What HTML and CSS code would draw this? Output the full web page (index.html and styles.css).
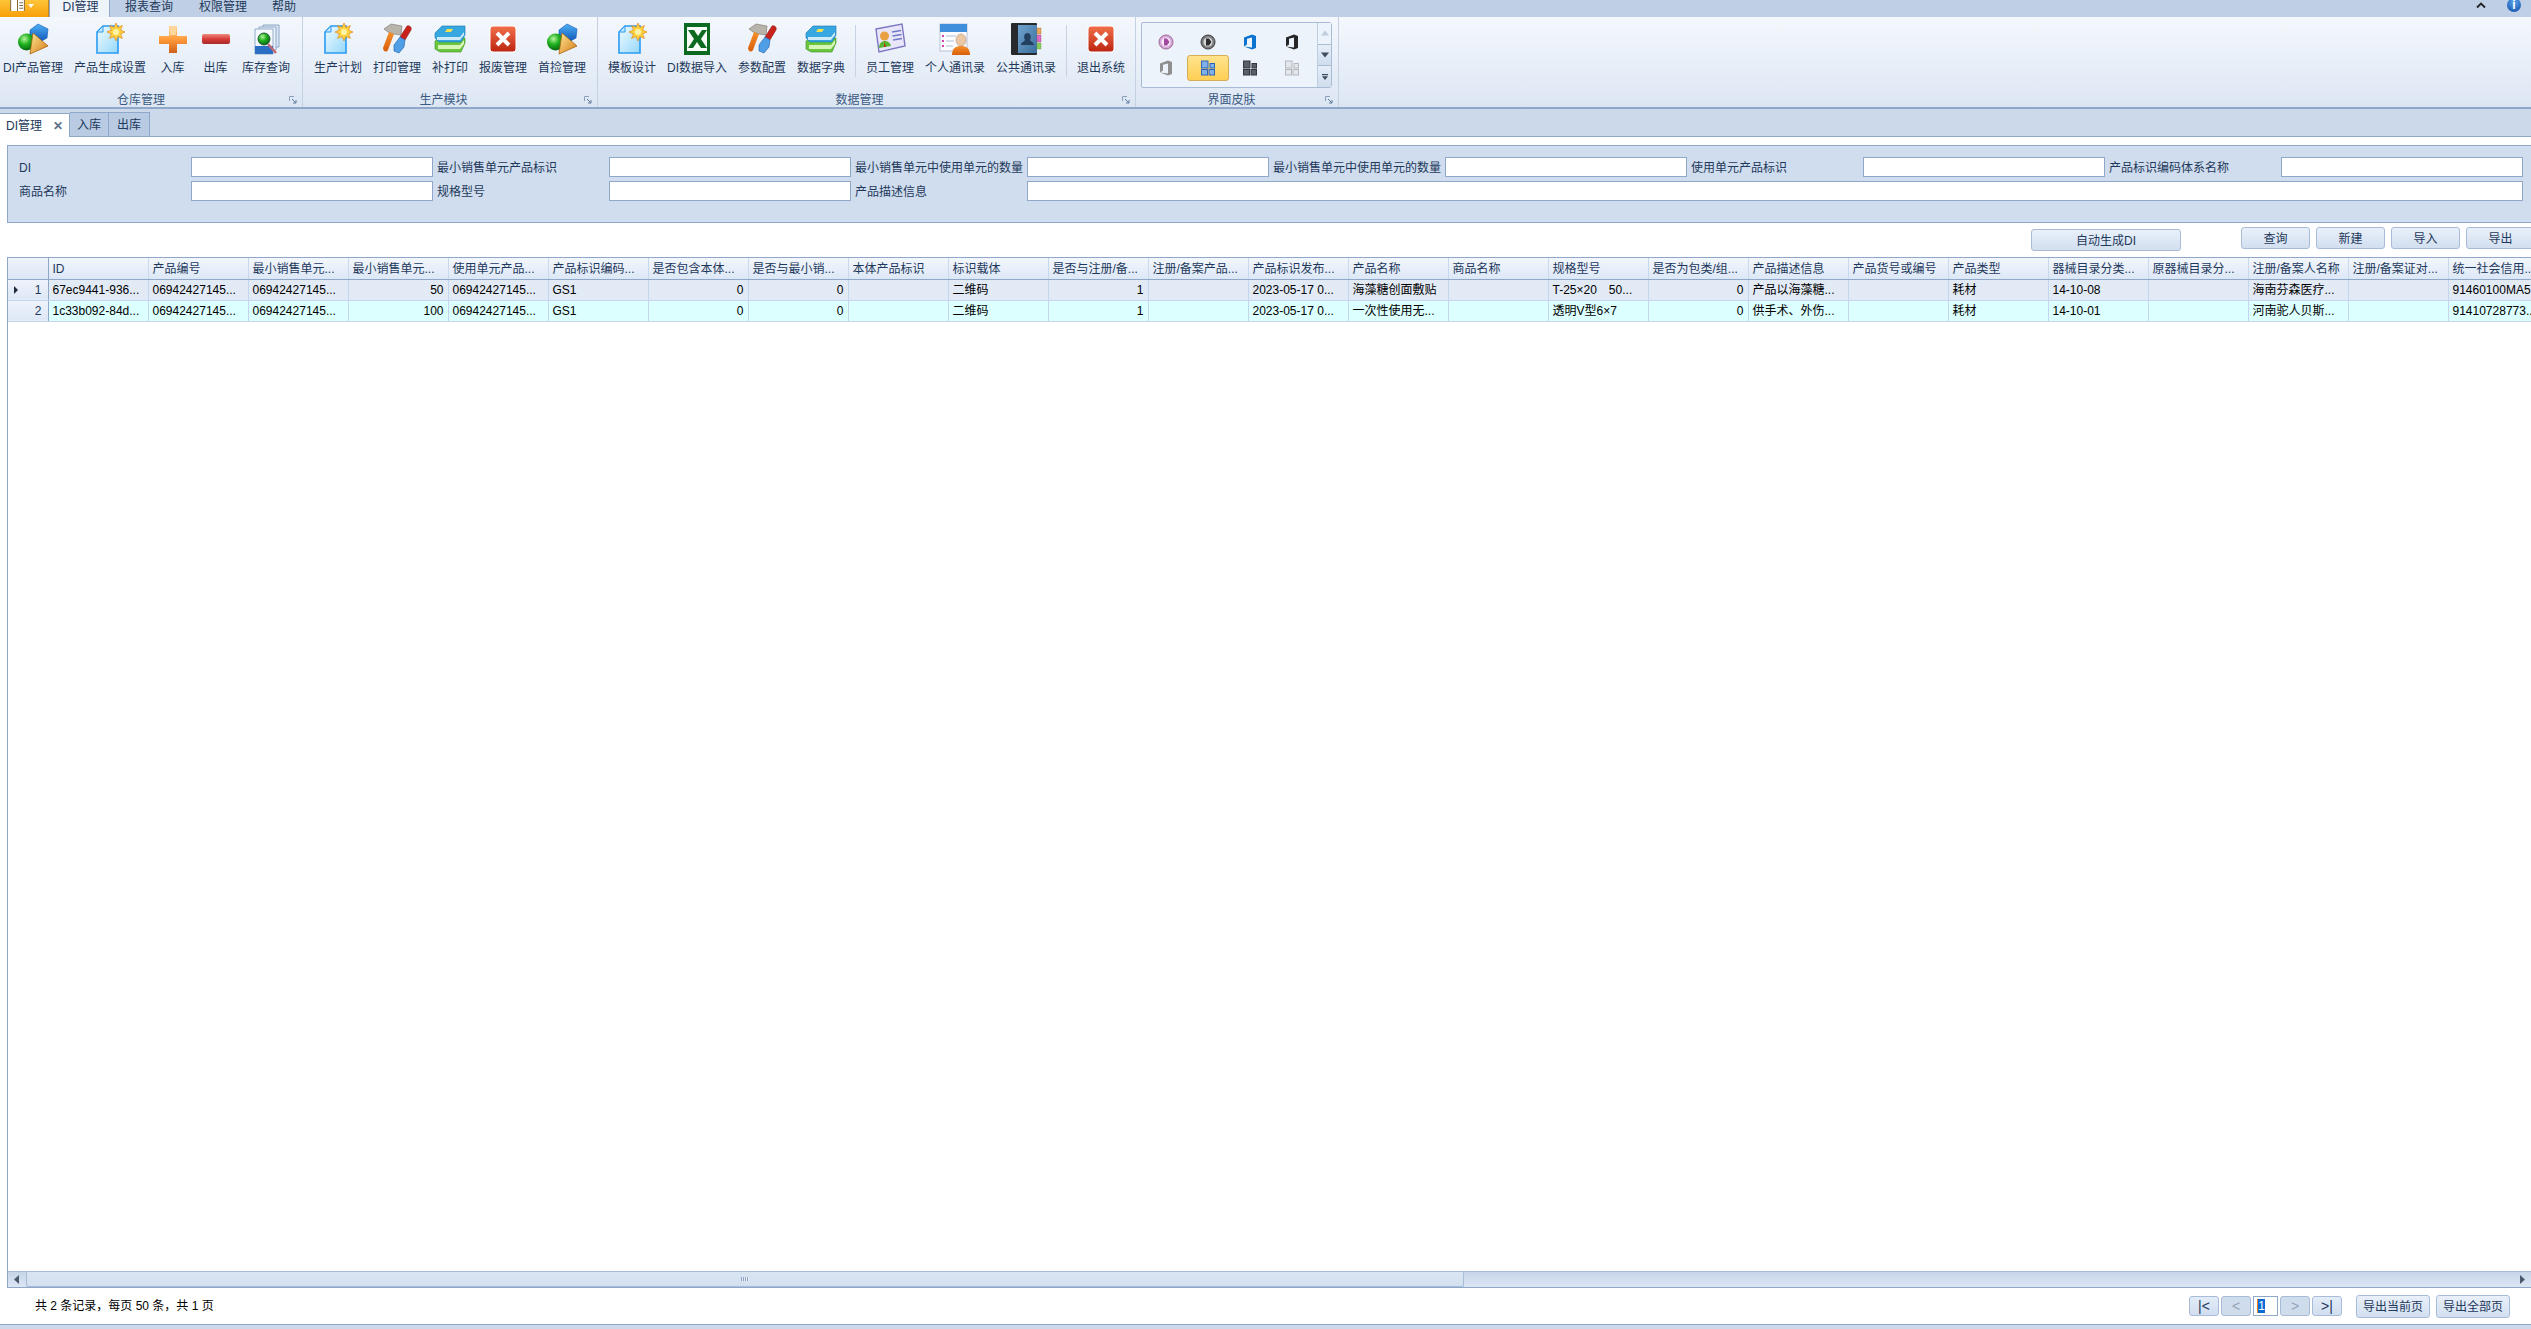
FILE: index.html
```html
<!DOCTYPE html>
<html lang="zh-CN">
<head>
<meta charset="utf-8">
<title>DI管理</title>
<link rel="stylesheet" href="styles.css">
</head>
<body>
<svg class="defs" aria-hidden="true">
  <defs>
    <linearGradient id="gBlue" x1="0" y1="0" x2="0" y2="1"><stop offset="0" stop-color="#4fb0f5"/><stop offset="1" stop-color="#0a4fb5"/></linearGradient>
    <radialGradient id="gGreen" cx=".38" cy=".32" r=".75"><stop offset="0" stop-color="#b5f59a"/><stop offset=".45" stop-color="#1fb01f"/><stop offset="1" stop-color="#045a10"/></radialGradient>
    <linearGradient id="gCone" x1="0" y1="0" x2="1" y2="1"><stop offset="0" stop-color="#fde89a"/><stop offset="1" stop-color="#d67a10"/></linearGradient>
    <linearGradient id="gDoc" x1="0" y1="0" x2="1" y2="1"><stop offset="0" stop-color="#f2fbff"/><stop offset="1" stop-color="#95d8fb"/></linearGradient>
    <linearGradient id="gPlus" x1="0" y1="0" x2="0" y2="1"><stop offset="0" stop-color="#ffd9a0"/><stop offset=".5" stop-color="#ff9a3a"/><stop offset="1" stop-color="#d0601a"/></linearGradient>
    <linearGradient id="gMinus" x1="0" y1="0" x2="0" y2="1"><stop offset="0" stop-color="#ee8a80"/><stop offset=".5" stop-color="#d83c38"/><stop offset="1" stop-color="#a82a28"/></linearGradient>
    <linearGradient id="gRed" x1="0" y1="0" x2="0" y2="1"><stop offset="0" stop-color="#f2704a"/><stop offset="1" stop-color="#bd2412"/></linearGradient>
    <linearGradient id="gBook" x1="0" y1="0" x2="1" y2="1"><stop offset="0" stop-color="#6fa3cf"/><stop offset="1" stop-color="#3c6e9c"/></linearGradient>
    <linearGradient id="gOrange" x1="0" y1="0" x2="0" y2="1"><stop offset="0" stop-color="#f78f2a"/><stop offset="1" stop-color="#d85f0a"/></linearGradient>

    <symbol id="i-shapes" viewBox="0 0 32 32">
      <path d="M13 7 21 1l10 5-1 9-9 5-8-6z" fill="url(#gBlue)" stroke="#0b55b5" stroke-width=".6"/>
      <circle cx="9.5" cy="19" r="8.5" fill="url(#gGreen)"/>
      <path d="M16 10 31 23 13 31z" fill="url(#gCone)" stroke="#a9650f" stroke-width=".8"/>
    </symbol>
    <symbol id="i-newdoc" viewBox="0 0 32 32">
      <path d="M9 3H24V30H3V9z" fill="url(#gDoc)" stroke="#2a9bf2" stroke-width="1.6"/>
      <path d="M9 3V9H3z" fill="#bfe7ff" stroke="#2a9bf2"/>
      <path d="M22 0 23.9 4.4 28.4 2.6 26.6 7.1 31 9 26.6 10.9 28.4 15.4 23.9 13.6 22 18 20.1 13.6 15.6 15.4 17.4 10.9 13 9 17.4 7.1 15.6 2.6 20.1 4.4z" fill="#ffd23f" stroke="#e2871a" stroke-width=".7"/>
      <circle cx="22" cy="9" r="3" fill="#fff3a8"/>
    </symbol>
    <symbol id="i-plus" viewBox="0 0 32 32">
      <path d="M12 3H20V13H30V21H20V30H12V21H2V13H12z" fill="url(#gPlus)"/>
      <path d="M13 4H19V12H13z" fill="#ffd8a0"/>
    </symbol>
    <symbol id="i-minus" viewBox="0 0 32 32">
      <rect x="2" y="11" width="28" height="10" rx="2" fill="url(#gMinus)"/>
    </symbol>
    <symbol id="i-search" viewBox="0 0 32 32">
      <path d="M13 2H29V24H13z" fill="#dbe7f5" stroke="#8ea6c6"/>
      <path d="M9 4H26V27H9z" fill="#eaf2fb" stroke="#8ea6c6"/>
      <path d="M5 6H23V31H5z" fill="#f6faff" stroke="#93aac8"/>
      <path d="M5 23H23V31H5z" fill="#2a6ec4"/>
      <path d="M18 21 26 30" stroke="#c26a78" stroke-width="2.6"/>
      <circle cx="14" cy="16" r="6" fill="url(#gGreen)" stroke="#25593a"/>
    </symbol>
    <symbol id="i-tool" viewBox="0 0 32 32">
      <path d="M3 6 10 1 21 3 20 12 13 11 7 9z" fill="#b9b4ab" stroke="#7a746c" stroke-width=".6"/>
      <path d="M8 9 13 11 7 27C5 30 2 28 2 25z" fill="url(#gOrange)"/>
      <path d="M26 3C29 2 31 5 30 7L24 17 19 14z" fill="#c9221a" stroke="#7e120c" stroke-width=".5"/>
      <path d="M19 14 24 17 23 24 18 30 13 28 13 22z" fill="#4f9fe6" stroke="#1c5ea8" stroke-width=".6"/>
    </symbol>
    <symbol id="i-books" viewBox="0 0 32 32">
      <path d="M1 18 7 15H31V20L27 29H6L1 26z" fill="#6ac63c" stroke="#3d8f26" stroke-width=".6"/>
      <path d="M4 22H26L30 17V21L26 26H4z" fill="#d8f5b8"/>
      <path d="M1 10 8 3H31V12L27 19H5L1 15z" fill="#37a7e2" stroke="#1976ad" stroke-width=".6"/>
      <path d="M3 14H26L30 9V12L26 17H3z" fill="#cdeafa"/>
      <path d="M13 6H19L17 9H11z" fill="#f4e04c"/>
    </symbol>
    <symbol id="i-redx" viewBox="0 0 32 32">
      <rect x="3" y="3" width="26" height="26" rx="3" fill="url(#gRed)" stroke="#fff" stroke-width="1"/>
      <path d="M10 10 22 22M22 10 10 22" stroke="#fff" stroke-width="4"/>
    </symbol>
    <symbol id="i-excel" viewBox="0 0 32 32">
      <rect x="3" y="0" width="26" height="32" fill="#0c6a20"/>
      <rect x="6" y="4" width="20" height="24" fill="#f7fbf7"/>
      <path d="M7 7H13L17 13 21 7H26L20 16 26 25H20L16 19 12 25H7L13 16z" fill="#0c6a20"/>
    </symbol>
    <symbol id="i-card" viewBox="0 0 32 32">
      <path d="M2 6 28 1 31 23 5 29z" fill="#e9e6fb" stroke="#7c76c0" stroke-width="1.4"/>
      <path d="M18 9 27 7.5M18.500 13 27.500 11.500M19 17 28 15.500" stroke="#6f7bc5" stroke-width="1.6"/>
      <path d="M5 25C5 19 9 18 11 18S16 19 17 23z" fill="#59b52e"/>
      <circle cx="10.500" cy="13" r="4.500" fill="#e8a043"/>
      <path d="M10.500 19 12 24H10z" fill="#c7201a"/>
    </symbol>
    <symbol id="i-contact" viewBox="0 0 32 32">
      <rect x="1" y="1" width="27" height="27" fill="#fbfcff" stroke="#b9c4d6"/>
      <rect x="1" y="1" width="27" height="8" fill="#3f8fdc"/>
      <path d="M3 13H5M3 18H5M3 23H5" stroke="#d83fb0" stroke-width="2"/>
      <path d="M7 13H17M7 18H15M7 23H14" stroke="#c9d5e6" stroke-width="1.5"/>
      <path d="M13 32C13 25 17 23 22 23S31 25 31 32z" fill="url(#gOrange)"/>
      <ellipse cx="22" cy="17" rx="5" ry="6" fill="#ecc7a4" stroke="#a8886a" stroke-width=".5"/>
    </symbol>
    <symbol id="i-abook" viewBox="0 0 32 32">
      <rect x="1" y="0" width="26" height="32" rx="1" fill="#27292c"/>
      <rect x="8" y="2" width="19" height="28" fill="url(#gBook)"/>
      <path d="M27 5H31V11H27z" fill="#eda85c" stroke="#a06a2c" stroke-width=".4"/>
      <path d="M27 12H31V19H27z" fill="#e06ec0" stroke="#a04080" stroke-width=".4"/>
      <path d="M27 20H31V26H27z" fill="#8ccc5c" stroke="#5a9a30" stroke-width=".4"/>
      <path d="M11 22C11 19 14 19 15 17 13 13 15 10 17.500 10S22 13 20 17C21 19 24 19 24 22z" fill="#23405f"/>
    </symbol>
    <symbol id="i-office" viewBox="0 0 16 16">
      <path d="M2 3.500 10 0.500 14 2V14L10 15.500 2 12.500 10 13.500V3.500L5 4.800V10.500L2 12.500z" fill="currentColor"/>
    </symbol>
    <symbol id="i-tiles" viewBox="0 0 16 16">
      <rect x="1.500" y="1" width="6.500" height="7"/><rect x="10" y="3.500" width="4.500" height="4.500"/>
      <rect x="1.500" y="9.500" width="6" height="5.500"/><rect x="9" y="9.500" width="5.500" height="5.500"/>
    </symbol>
    <symbol id="i-launch" viewBox="0 0 8 8">
      <path d="M.5.500H5M.5.500V5" fill="none" stroke="#8aa0bb"/>
      <path d="M3 3 7 7M7 4V7H4" fill="none" stroke="#5f7a9c"/>
    </symbol>
  </defs>
</svg>

<header class="tabstrip">
  <div class="appbtn">
    <svg class="appbook" viewBox="0 0 16 12"><path d="M0 0H16V12H0z" fill="#fff"/><path d="M8 0V12" stroke="#7a5a20"/><path d="M10 3H14M10 6H14M10 9H14" stroke="#6b5a38"/><path d="M.5 0V12M15.500 0V12" stroke="#7a5a20"/></svg>
    <svg class="apparrow" viewBox="0 0 7 5"><path d="M0 0H7L3.500 5z" fill="#fff"/></svg>
  </div>
  <div class="rtab active">DI管理</div>
  <div class="rtab">报表查询</div>
  <div class="rtab">权限管理</div>
  <div class="rtab short">帮助</div>
  <div class="winctl">
    <svg class="chev" viewBox="0 0 10 7"><path d="M1 5.500 5 1.500 9 5.500" fill="none" stroke="#222" stroke-width="1.800"/></svg>
    <div class="info">i</div>
  </div>
</header>

<section class="ribbon">
  <div class="group g1">
    <div class="items">
      <div class="item"><svg class="ico"><use href="#i-shapes"/></svg><span>DI产品管理</span></div>
      <div class="item"><svg class="ico"><use href="#i-newdoc"/></svg><span>产品生成设置</span></div>
      <div class="item narrow"><svg class="ico"><use href="#i-plus"/></svg><span>入库</span></div>
      <div class="item narrow"><svg class="ico"><use href="#i-minus"/></svg><span>出库</span></div>
      <div class="item"><svg class="ico"><use href="#i-search"/></svg><span>库存查询</span></div>
    </div>
    <div class="glabel">仓库管理<svg class="launch"><use href="#i-launch"/></svg></div>
  </div>
  <div class="group g2">
    <div class="items">
      <div class="item"><svg class="ico"><use href="#i-newdoc"/></svg><span>生产计划</span></div>
      <div class="item"><svg class="ico"><use href="#i-tool"/></svg><span>打印管理</span></div>
      <div class="item"><svg class="ico"><use href="#i-books"/></svg><span>补打印</span></div>
      <div class="item"><svg class="ico"><use href="#i-redx"/></svg><span>报废管理</span></div>
      <div class="item"><svg class="ico"><use href="#i-shapes"/></svg><span>首捡管理</span></div>
    </div>
    <div class="glabel">生产模块<svg class="launch"><use href="#i-launch"/></svg></div>
  </div>
  <div class="group g3">
    <div class="items">
      <div class="item"><svg class="ico"><use href="#i-newdoc"/></svg><span>模板设计</span></div>
      <div class="item"><svg class="ico"><use href="#i-excel"/></svg><span>DI数据导入</span></div>
      <div class="item"><svg class="ico"><use href="#i-tool"/></svg><span>参数配置</span></div>
      <div class="item"><svg class="ico"><use href="#i-books"/></svg><span>数据字典</span></div>
      <div class="vsep"></div>
      <div class="item"><svg class="ico"><use href="#i-card"/></svg><span>员工管理</span></div>
      <div class="item"><svg class="ico"><use href="#i-contact"/></svg><span>个人通讯录</span></div>
      <div class="item"><svg class="ico"><use href="#i-abook"/></svg><span>公共通讯录</span></div>
      <div class="vsep"></div>
      <div class="item"><svg class="ico"><use href="#i-redx"/></svg><span>退出系统</span></div>
    </div>
    <div class="glabel">数据管理<svg class="launch"><use href="#i-launch"/></svg></div>
  </div>
  <div class="group g4">
    <div class="gallery">
      <div class="skins">
        <div class="skin"><svg class="sk" viewBox="0 0 16 16"><circle cx="8" cy="8" r="7" fill="#d8a8d8" stroke="#9a6a9a"/><circle cx="8" cy="8" r="4.500" fill="#f7edf7"/><path d="M6 4.500H9L11.500 8 9 11.500H6z" fill="#a04aa0"/></svg></div>
        <div class="skin"><svg class="sk" viewBox="0 0 16 16"><circle cx="8" cy="8" r="7" fill="#7c7c7c" stroke="#3a3a3a"/><circle cx="8" cy="8" r="4.500" fill="#d8d8d8"/><path d="M6 4.500H9L11.500 8 9 11.500H6z" fill="#2c2c2c"/></svg></div>
        <div class="skin"><svg class="sk c-blue"><use href="#i-office"/></svg></div>
        <div class="skin"><svg class="sk c-black"><use href="#i-office"/></svg></div>
        <div class="skin"><svg class="sk c-gray"><use href="#i-office"/></svg></div>
        <div class="skin selected"><svg class="sk t-blue"><use href="#i-tiles"/></svg></div>
        <div class="skin"><svg class="sk t-dark"><use href="#i-tiles"/></svg></div>
        <div class="skin"><svg class="sk t-light"><use href="#i-tiles"/></svg></div>
      </div>
      <div class="gscroll">
        <div class="gbtn off"><svg viewBox="0 0 8 5" class="tri"><path d="M0 5H8L4 0z"/></svg></div>
        <div class="gbtn"><svg viewBox="0 0 8 5" class="tri"><path d="M0 0H8L4 5z"/></svg></div>
        <div class="gbtn"><svg viewBox="0 0 8 8" class="tri"><path d="M0 0H8V1.500H0zM0 3H8L4 8z"/></svg></div>
      </div>
    </div>
    <div class="glabel">界面皮肤<svg class="launch"><use href="#i-launch"/></svg></div>
  </div>
</section>

<nav class="doctabs">
  <div class="dtab active">DI管理<span class="close">✕</span></div>
  <div class="dtab">入库</div>
  <div class="dtab">出库</div>
</nav>

<form class="filters">
  <label>DI</label><input class="field" type="text">
  <label>最小销售单元产品标识</label><input class="field" type="text">
  <label>最小销售单元中使用单元的数量</label><input class="field" type="text">
  <label>最小销售单元中使用单元的数量</label><input class="field" type="text">
  <label>使用单元产品标识</label><input class="field" type="text">
  <label>产品标识编码体系名称</label><input class="field" type="text">
  <label>商品名称</label><input class="field" type="text">
  <label>规格型号</label><input class="field" type="text">
  <label>产品描述信息</label><input class="field wide" type="text">
</form>

<div class="toolbar">
  <button class="btn auto" type="button">自动生成DI</button>
  <button class="btn act" type="button">查询</button>
  <button class="btn act" type="button">新建</button>
  <button class="btn act" type="button">导入</button>
  <button class="btn act" type="button">导出</button>
</div>

<main class="grid">
  <div class="gridbody">
    <table>
      <thead>
        <tr>
          <th class="rowh"></th>
          <th>ID</th><th>产品编号</th><th>最小销售单元...</th><th>最小销售单元...</th><th>使用单元产品...</th><th>产品标识编码...</th><th>是否包含本体...</th><th>是否与最小销...</th><th>本体产品标识</th><th>标识载体</th><th>是否与注册/备...</th><th>注册/备案产品...</th><th>产品标识发布...</th><th>产品名称</th><th>商品名称</th><th>规格型号</th><th>是否为包类/组...</th><th>产品描述信息</th><th>产品货号或编号</th><th>产品类型</th><th>器械目录分类...</th><th>原器械目录分...</th><th>注册/备案人名称</th><th>注册/备案证对...</th><th>统一社会信用...</th>
        </tr>
      </thead>
      <tbody>
        <tr class="r1">
          <td class="rowh"><svg class="cur" viewBox="0 0 4 8"><path d="M0 0 4 4 0 8z"/></svg>1</td>
          <td>67ec9441-936...</td><td>06942427145...</td><td>06942427145...</td><td class="n">50</td><td>06942427145...</td><td>GS1</td><td class="n">0</td><td class="n">0</td><td></td><td>二维码</td><td class="n">1</td><td></td><td>2023-05-17 0...</td><td>海藻糖创面敷贴</td><td></td><td>T-25×20　50...</td><td class="n">0</td><td>产品以海藻糖...</td><td></td><td>耗材</td><td>14-10-08</td><td></td><td>海南芬森医疗...</td><td></td><td>91460100MA5...</td>
        </tr>
        <tr class="r2">
          <td class="rowh">2</td>
          <td>1c33b092-84d...</td><td>06942427145...</td><td>06942427145...</td><td class="n">100</td><td>06942427145...</td><td>GS1</td><td class="n">0</td><td class="n">0</td><td></td><td>二维码</td><td class="n">1</td><td></td><td>2023-05-17 0...</td><td>一次性使用无...</td><td></td><td>透明V型6×7</td><td class="n">0</td><td>供手术、外伤...</td><td></td><td>耗材</td><td>14-10-01</td><td></td><td>河南驼人贝斯...</td><td></td><td>91410728773...</td>
        </tr>
      </tbody>
    </table>
  </div>
  <div class="hscroll">
    <div class="sarrow"><svg viewBox="0 0 5 9" class="sa"><path d="M5 0V9L0 4.500z"/></svg></div>
    <div class="thumb"><span class="grip"></span></div>
    <div class="strack"></div>
    <div class="sarrow"><svg viewBox="0 0 5 9" class="sa"><path d="M0 0V9L5 4.500z"/></svg></div>
  </div>
</main>

<footer class="pager">
  <div class="summary">共 2 条记录，每页 50 条，共 1 页</div>
  <div class="pbtns">
    <button class="pbtn" type="button">|&lt;</button>
    <button class="pbtn off" type="button">&lt;</button>
    <div class="pnum"><span class="psel">1</span></div>
    <button class="pbtn off" type="button">&gt;</button>
    <button class="pbtn" type="button">&gt;|</button>
    <button class="btn exp first" type="button">导出当前页</button>
    <button class="btn exp" type="button">导出全部页</button>
  </div>
</footer>
<div class="statusline"></div>
</body>
</html>
```
FILE: styles.css
```css
* { box-sizing: border-box; }
html, body { margin: 0; padding: 0; }
body {
  width: 2531px;
  height: 1329px;
  overflow: hidden;
  display: flex;
  flex-direction: column;
  background: #fff;
  font: 12px/16px "Liberation Sans", "Noto Sans CJK SC", sans-serif;
  color: #1e395b;
}
.defs { position: absolute; width: 0; height: 0; }

/* top tab strip */
.tabstrip { height: 17px; flex: none; display: flex; background: #bfd0e6; position: relative; }
.appbtn {
  width: 49px; display: flex; align-items: flex-start; gap: 3px; padding-left: 10px;
  background: linear-gradient(#ffc53a, #f79f07);
  border-right: 1px solid #c9831c;
}
.appbook { width: 15px; height: 11px; }
.apparrow { width: 6px; height: 4px; margin-top: 4px; }
.rtab { height: 17px; line-height: 15px; width: 74px; text-align: center; }
.rtab.active { width: 61px; margin-right: 2px; padding-left: 2px; background: #eff4fb; border: 1px solid #8fa9c9; border-top: 0; border-bottom: 0; }
.rtab.short { width: 48px; }
.winctl { margin-left: auto; display: flex; align-items: flex-start; gap: 21px; padding-right: 10px; }
.chev { width: 10px; height: 7px; margin-top: 2px; }
.info {
  width: 14px; height: 14px; margin-top: -2px; border-radius: 50%;
  background: radial-gradient(circle at 50% 30%, #5da4ea, #0c4aa8);
  color: #fff; font-weight: bold; text-align: center; line-height: 14px;
}

/* ribbon */
.ribbon {
  height: 92px; flex: none; display: flex;
  background: linear-gradient(#f4f8fd, #dce6f3);
  border-bottom: 2px solid #8fa7c8;
}
.group { display: flex; flex-direction: column; border-right: 1px solid #c3d1e3; flex: none; }
.g1 { width: 303px; }
.g2 { width: 295px; padding-left: 7px; }
.g3 { width: 538px; padding-left: 6px; }
.g4 { width: 203px; padding-left: 5px; }
.items { height: 74px; flex: none; display: flex; gap: 3px; padding-top: 6px; }
.g1 .items { gap: 2px; }
.item { display: flex; flex-direction: column; align-items: center; padding: 0 4px; white-space: nowrap; }
.g1 .item:first-child { padding: 0 3px; margin-right: 2px; }
.item.narrow { width: 41px; }
.ico { width: 32px; height: 32px; flex: none; margin-bottom: 5px; }
.vsep { width: 1px; margin: 2px 3px 14px; background: #c7d3e3; }
.glabel { position: relative; height: 16px; flex: none; line-height: 18px; text-align: center; padding-right: 20px; color: #3b5a82; }
.launch { position: absolute; right: 5px; top: 5px; width: 8px; height: 8px; }

/* skin gallery */
.gallery {
  width: 191px; height: 66px; flex: none; margin-top: 5px; margin-bottom: 3px; display: flex;
  border: 1px solid #a9bcd5; border-radius: 2px 3px 3px 2px; background: #edf3fb;
}
.g4 .glabel { padding-right: 16px; }
.skins { width: 175px; display: grid; grid-template-columns: repeat(4, 42px); grid-auto-rows: 26px; padding: 6px 0 0 3px; }
.skin { display: flex; align-items: center; justify-content: center; border: 1px solid transparent; border-radius: 3px; }
.skin.selected { background: linear-gradient(#ffe38c, #ffcf55); border-color: #d6ac55; }
.sk { width: 16px; height: 16px; }
.c-blue { color: #0a73cf; }
.c-black { color: #262626; }
.c-gray { color: #8f8f8f; }
.t-blue { fill: #7fb0ea; stroke: #2f64b5; }
.t-dark { fill: #5a5f68; stroke: #33363c; }
.t-light { fill: #e3e6ea; stroke: #b5b9bf; }
.gscroll { flex: 1; display: flex; flex-direction: column; border-left: 1px solid #bccde2; }
.gbtn { flex: 1; display: flex; align-items: center; justify-content: center; background: linear-gradient(#e6eef9, #cfdded); border-bottom: 1px solid #a9bcd5; fill: #3d4d60; }
.gbtn:last-child { border-bottom: 0; }
.gbtn.off { background: #edf3fb; fill: #c0cddd; }
.tri { width: 8px; height: 6px; }

/* document tabs */
.doctabs { height: 28px; flex: none; display: flex; align-items: flex-end; background: #ccd9ea; border-bottom: 1px solid #8ea8ca; }
.dtab { height: 24px; line-height: 25px; width: 39px; text-align: center; background: #b8cbe3; border: 1px solid #8ea8ca; border-bottom: 0; border-left: 0; }
.dtab.active { width: 70px; padding-left: 6px; text-align: left; background: #fff; margin-bottom: -1px; display: flex; justify-content: space-between; padding-right: 6px; }
.dtab:last-child { width: 41px; }
.close { color: #5d6f87; font-weight: bold; font-size: 12px; }

/* filter panel */
.filters {
  height: 78px; flex: none; margin: 8px 0 0 7px; padding: 11px 0 0 10px;
  display: grid; grid-template-columns: repeat(6, 170px 242px); grid-template-rows: 20px 20px; column-gap: 3px; row-gap: 4px;
  background: #d0ddee; border: 1px solid #8fa8ca; border-right: 0;
}
.filters label { line-height: 22px; white-space: nowrap; padding-left: 1px; }
.field { width: 100%; height: 20px; margin: 0; padding: 0 2px; border: 1px solid #8fa8ca; background: #fff; font: inherit; }
.field.wide { grid-column: 6 / -1; }

/* toolbar */
.toolbar { height: 34px; flex: none; display: flex; justify-content: flex-end; align-items: flex-start; gap: 6px; padding-top: 4px; margin-right: -4px; }
.btn {
  height: 22px; padding: 1px 0 0; font: inherit; color: #1e395b; cursor: default;
  background: linear-gradient(#e9f0fa, #d2dff0); border: 1px solid #a8bcd7; border-radius: 3px;
}
.btn.auto { width: 150px; margin: 2px 54px 0 0; }
.btn.act { width: 69px; }

/* data grid */
.grid { flex: 1; min-height: 0; display: flex; flex-direction: column; margin-left: 7px; border: 1px solid #8fa8ca; border-right: 0; }
.gridbody { flex: 1; min-height: 0; overflow: hidden; }
table { border-collapse: collapse; table-layout: fixed; width: 2540px; }
th, td { width: 100px; height: 21px; padding: 1px 4px 0; border: 1px solid #c3d6ee; text-align: left; font-weight: normal; white-space: nowrap; overflow: hidden; line-height: 16px; }
th { padding-top: 2px; background: linear-gradient(#f3f7fd, #dce7f6); color: #1e395b; border-top: 0; border-bottom: 1px solid #8fa8ca; border-left-color: #c9d8ea; border-right-color: #c9d8ea; }
td { color: #000; }
.r1 td { background: #e2eaf6; }
.r2 td { background: #dcffff; }
.n { text-align: right; }
th.rowh, td.rowh { width: 40px; padding-right: 6px; text-align: right; color: #1e395b; border-left: 0; border-right: 1px solid #8fa8ca; background: linear-gradient(#eef3fb, #dde7f5); position: relative; }
.cur { position: absolute; left: 6px; top: 6px; width: 4px; height: 8px; fill: #1f2b3d; }

/* horizontal scrollbar */
.hscroll { height: 16px; flex: none; display: flex; background: linear-gradient(#c6d5e8, #dce7f4); border-top: 1px solid #a7bcd8; }
.sarrow { width: 17px; display: flex; align-items: center; justify-content: center; }
.sa { width: 5px; height: 9px; fill: #4c5a70; }
.thumb { width: 1438px; margin-left: 1px; display: flex; align-items: center; justify-content: center; background: linear-gradient(#dae5f2, #d3e0ef); border: 1px solid #a7bcd8; border-top: 0; border-radius: 2px; }
.grip { width: 8px; height: 4px; background: repeating-linear-gradient(90deg, #8fa5c2 0 1px, #e6edf6 1px 2px); }
.strack { flex: 1; }

/* pager */
.pager { height: 36px; flex: none; display: flex; justify-content: space-between; align-items: center; padding: 0 21px 0 35px; }
.summary { color: #000; }
.pbtns { display: flex; align-items: center; gap: 2px; }
.pbtn { width: 30px; height: 20px; padding: 0; font: 14px/16px "Liberation Sans", sans-serif; color: #1e395b; background: linear-gradient(#e3ecf8, #d0deef); border: 1px solid #a8bcd7; border-radius: 3px; cursor: default; }
.pbtn.off { color: #95a4b8; background: #cfdcec; }
.pnum { width: 25px; height: 20px; border: 1px solid #8fa8ca; background: #fff; padding: 2px 0 0 3px; line-height: 14px; }
.psel { display: inline-block; width: 8px; height: 14px; background: #0a6ad6; border-left: 1px solid #f08010; color: #fff; text-align: center; }
.btn.exp { width: 74px; height: 23px; margin-left: 4px; }
.btn.exp.first { margin-left: 12px; }
.statusline { height: 5px; flex: none; background: #cbd9ea; border-top: 1px solid #8fa8ca; }
```
